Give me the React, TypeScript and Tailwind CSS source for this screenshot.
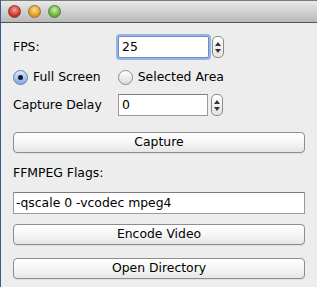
import React from "react";

const font = { fontFamily: '"DejaVu Sans", "Liberation Sans", sans-serif' };

function Light({ from, to, ring }: { from: string; to: string; ring: string }) {
    return (
        <div
            className="w-[13px] h-[13px] rounded-full border"
            style={{ background: `radial-gradient(circle at 50% 35%, ${from}, ${to} 70%)`, borderColor: ring }}
        />
    );
}

function Stepper() {
    return (
        <div className="w-[12px] h-[22px] rounded-[5px] border border-[#8a8a8a] bg-gradient-to-b from-white to-[#e2e2e2] flex flex-col items-center justify-center gap-[3px]">
            <div className="w-0 h-0 border-l-[3px] border-r-[3px] border-b-[4px] border-l-transparent border-r-transparent border-b-[#333]" />
            <div className="w-0 h-0 border-l-[3px] border-r-[3px] border-t-[4px] border-l-transparent border-r-transparent border-t-[#333]" />
        </div>
    );
}

function Spinner({ value, focused }: { value: string; focused?: boolean }) {
    return (
        <div className="flex items-center gap-[3px]">
            <div
                className={
                    focused
                        ? "w-[91px] h-[22px] rounded-[2px] ring-[2px] ring-[#93b4e6] border border-[#6e8fbf] bg-white flex items-center pl-[3px] text-[12.4px] text-black"
                        : "w-[90px] h-[22px] border border-[#9a9a9a] border-t-[#7c7c7c] bg-white flex items-center pl-[3px] text-[12.4px] text-black"
                }
            >
                {value}
            </div>
            <Stepper />
        </div>
    );
}

function Radio({ label, checked }: { label: string; checked?: boolean }) {
    return (
        <div className="flex items-center gap-[5px]">
            <div
                className={
                    checked
                        ? "w-[15px] h-[15px] rounded-full border border-[#5f7fae] bg-gradient-to-b from-[#d7e6fb] to-[#7ea9e6] flex items-center justify-center"
                        : "w-[15px] h-[15px] rounded-full border border-[#8c8c8c] bg-gradient-to-b from-white to-[#dcdcdc]"
                }
            >
                {checked && <div className="w-[5px] h-[5px] rounded-full bg-[#1b1b1b]" />}
            </div>
            <span className="text-[12.4px] text-black">{label}</span>
        </div>
    );
}

function Button({ label }: { label: string }) {
    return (
        <div className="w-[292px] h-[21px] rounded-[4px] border border-[#8d8d8d] bg-gradient-to-b from-white via-[#f6f6f6] to-[#e6e6e6] flex items-center justify-center text-[12.4px] text-black shadow-[0_1px_0_rgba(0,0,0,0.06)]">
            {label}
        </div>
    );
}

export default function App() {
    return (
        <div className="w-[317px] h-[287px] flex bg-[#2d4a7a]" style={font}>
            <div className="w-[1px] bg-[#3a5b8f]" />
            <div className="flex-1 flex flex-col bg-[#ededed]">
                {/* Title bar */}
                <div className="h-[23px] flex items-center gap-[7px] pl-[7px] bg-gradient-to-b from-[#e9e9e9] to-[#b9b9b9] border-b border-[#545454] border-t border-t-[#7a7a7a]">
                    <Light from="#f6a19a" to="#c72a1f" ring="#8e3a33" />
                    <Light from="#fbe08c" to="#d9951a" ring="#93702b" />
                    <Light from="#cdf0a2" to="#5fa93a" ring="#4f7f35" />
                </div>

                <div className="flex-1 flex flex-col pl-[12px] pt-[13px]">
                    {/* FPS */}
                    <div className="flex items-center h-[22px]">
                        <span className="w-[105px] text-[12.4px] text-black">FPS:</span>
                        <Spinner value="25" focused />
                    </div>

                    {/* Capture area */}
                    <div className="flex items-center h-[15px] mt-[12px] gap-[17px]">
                        <Radio label="Full Screen" checked />
                        <Radio label="Selected Area" />
                    </div>

                    {/* Delay */}
                    <div className="flex items-center h-[22px] mt-[9px]">
                        <span className="w-[105px] text-[12.4px] text-black">Capture Delay</span>
                        <Spinner value="0" />
                    </div>

                    <div className="mt-[16px]">
                        <Button label="Capture" />
                    </div>

                    <div className="mt-[12px] h-[16px] flex items-center text-[12.4px] text-black">FFMPEG Flags:</div>

                    <div className="mt-[11px] w-[292px] h-[22px] border border-[#9a9a9a] border-t-[#7c7c7c] bg-white flex items-center pl-[2px] text-[12.4px] text-black">
                        -qscale 0 -vcodec mpeg4
                    </div>

                    <div className="mt-[10px]">
                        <Button label="Encode Video" />
                    </div>
                    <div className="mt-[13px]">
                        <Button label="Open Directory" />
                    </div>
                </div>
            </div>
        </div>
    );
}
